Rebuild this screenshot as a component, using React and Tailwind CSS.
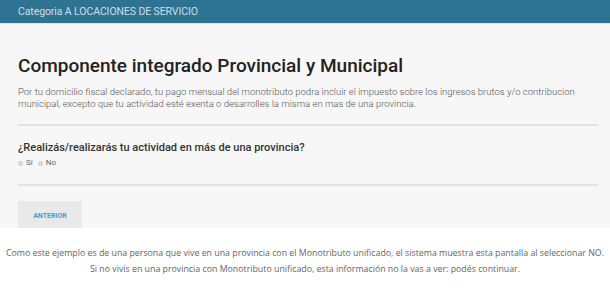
export default function App() {
  return (
    <div className="w-[610px] h-[288px] bg-white overflow-hidden" style={{ fontFamily: "Roboto, 'Liberation Sans', sans-serif" }}>
      <div className="h-[24px] bg-[#2f7393] flex items-center px-[18px] border-b border-[#cfeaf2]">
        <span className="text-[10.5px] text-[#c9dfe9] tracking-[-0.1px]">Categoria A LOCACIONES DE SERVICIO</span>
      </div>
      <div className="h-[204px] bg-[#f7f7f7] pl-[18px] pr-[12px] overflow-hidden">
        <h1 className="pt-[28px] text-[19px] leading-[28px] font-medium text-[#222]">Componente integrado Provincial y Municipal</h1>
        <p className="mt-[6px] text-[9.5px] leading-[12px] text-[#555] font-light pr-[10px]">
          Por tu domicilio fiscal declarado, tu pago mensual del monotributo podra incluir el impuesto sobre los ingresos brutos y/o contribucion municipal, excepto que tu actividad esté exenta o desarrolles la misma en mas de una provincia.
        </p>
        <div className="mt-[14px] h-[2px] bg-[#e2e2e2]"></div>
        <p className="mt-[15px] text-[11px] leading-[14px] font-medium text-[#333]">¿Realizás/realizarás tu actividad en más de una provincia?</p>
        <div className="mt-[3px] flex items-center gap-[3px] text-[8px] leading-[10px] text-[#666]">
          <span className="w-[5px] h-[5px] rounded-full bg-[#ddd] border border-[#ccc]"></span>
          <span>Sí</span>
          <span className="ml-[2px] w-[5px] h-[5px] rounded-full bg-[#ddd] border border-[#ccc]"></span>
          <span>No</span>
        </div>
        <div className="mt-[16px] h-[2px] bg-[#e2e2e2]"></div>
        <div className="mt-[15px] w-[64px] h-[30px] bg-[#e9e9e9] flex items-center justify-center">
          <span className="text-[7px] font-bold text-[#3ea1d2]">ANTERIOR</span>
        </div>
      </div>
      <div className="pt-[17px] text-center text-[8.8px] leading-[16px] text-[#666]" style={{ fontFamily: "'Open Sans', sans-serif" }}>
        <p>Como este ejemplo es de una persona que vive en una provincia con el Monotributo unificado, el sistema muestra esta pantalla al seleccionar NO.</p>
        <p>Si no vivís en una provincia con Monotributo unificado, esta información no la vas a ver: podés continuar.</p>
      </div>
    </div>
  );
}
